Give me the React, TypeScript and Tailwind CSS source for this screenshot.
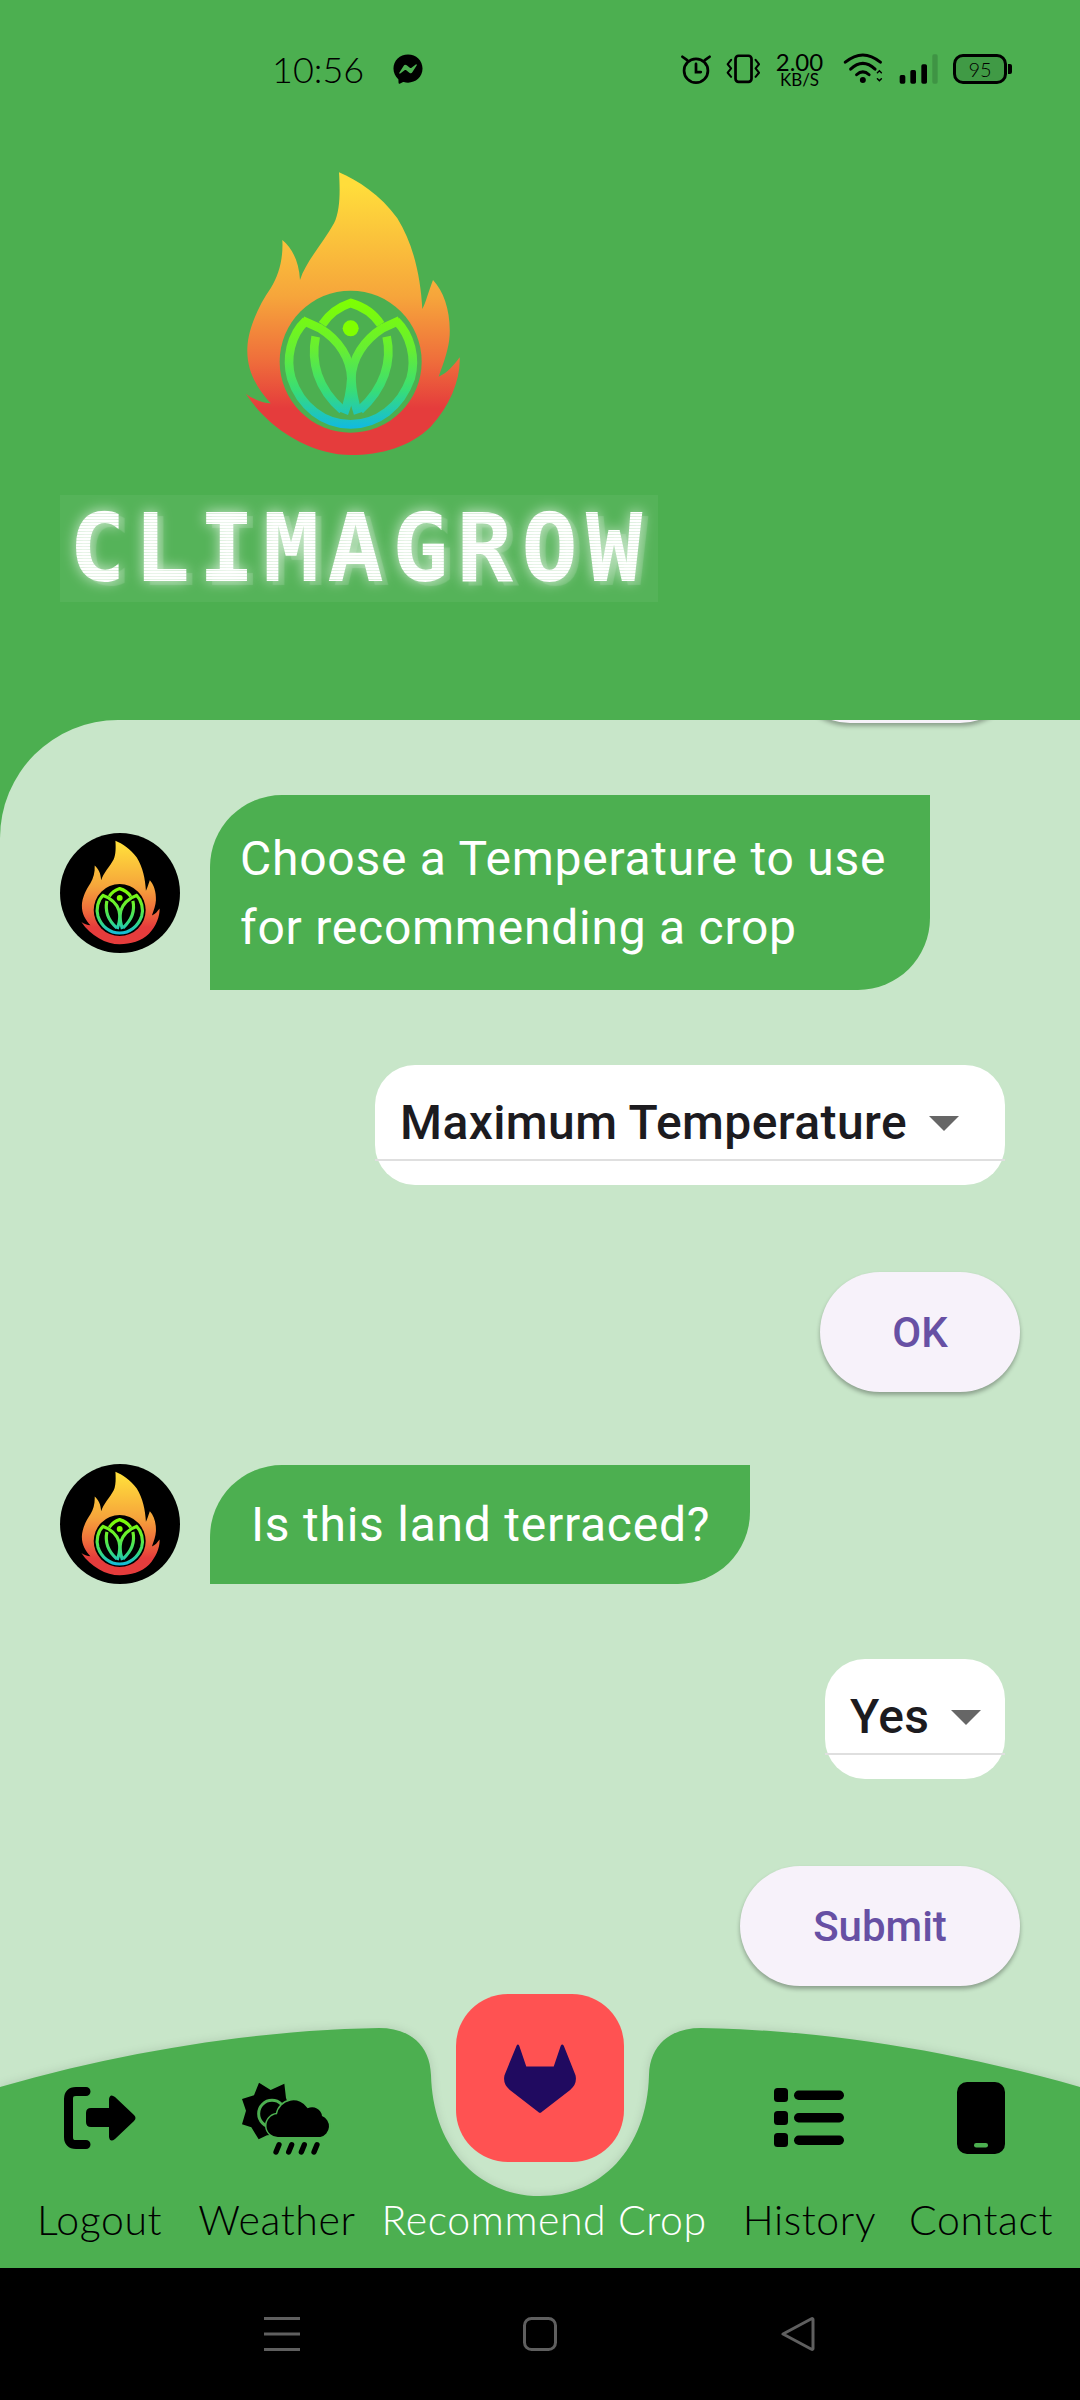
import React from "react";
import { FaFacebookMessenger } from "react-icons/fa";

const roboto = "font-['Roboto',sans-serif]";

function Logo({ w, h, inner, id }: { w: number; h: number; inner: string; id: string }) {
  return (
    <svg width={w} height={h} viewBox="0 0 705 900" className="shrink-0">
      <defs>
        <linearGradient id={`flame-${id}`} gradientUnits="userSpaceOnUse" x1="0" y1="60" x2="0" y2="730">
          <stop offset="0" stopColor="#ffdd3b" />
          <stop offset="0.5" stopColor="#f6a53b" />
          <stop offset="0.78" stopColor="#ef6f3b" />
          <stop offset="1" stopColor="#e53c3c" />
        </linearGradient>
        <linearGradient id={`lotus-${id}`} gradientUnits="userSpaceOnUse" x1="0" y1="400" x2="0" y2="785">
          <stop offset="0" stopColor="#80ff00" />
          <stop offset="0.4" stopColor="#66ee33" />
          <stop offset="0.72" stopColor="#38dd77" />
          <stop offset="1" stopColor="#12bbdd" />
        </linearGradient>
      </defs>
      <path
        fill={`url(#flame-${id})`}
        d="M315 22 C370 45 440 90 490 160 C540 240 560 340 565 432 C575 415 585 375 597 345 C630 380 650 440 647 510 C645 550 630 590 614 635 C640 625 660 600 677 577 C680 640 650 720 590 785 C530 845 440 870 350 870 C240 870 110 800 36 687 C55 700 85 715 110 715 C70 670 38 620 40 550 C42 490 75 420 110 370 C135 330 148 280 145 225 C175 250 195 290 198 345 C215 290 270 230 300 175 C320 135 318 70 315 22 Z"
      />
      <ellipse cx="350" cy="590" rx="213" ry="213" fill={inner} />
      <g fill="none" stroke={`url(#lotus-${id})`} strokeWidth="26" strokeLinejoin="miter">
        <path d="M215 468 C170 510 155 580 172 640 C200 725 270 778 350 778 C430 778 500 725 530 640 C547 580 530 510 487 468" />
        <path d="M205 466 L258 490 C315 525 350 580 352 640 C354 680 360 710 372 745" />
        <path d="M497 466 L445 490 C390 525 354 580 352 640 C350 680 344 710 330 745" />
        <path d="M245 515 C230 590 250 670 325 735" />
        <path d="M458 515 C475 590 450 670 378 735" />
        <path d="M265 478 C290 440 320 424 350 414 C385 424 415 440 440 478" />
      </g>
      <circle cx="350" cy="490" r="24" fill="#80ff00" />
    </svg>
  );
}

function Avatar({ id }: { id: string }) {
  return (
    <div className="flex h-[120px] w-[120px] shrink-0 items-center justify-center rounded-full bg-black">
      <Logo w={86} h={110} inner="#000000" id={id} />
    </div>
  );
}

function StatusBar() {
  return (
    <div className="flex h-[138px] items-center justify-between pl-[272px] pr-[68px] text-black">
      <div className="flex items-center gap-[31px]">
        <span className="w-[90px] font-['Lato',sans-serif] text-[36px] font-light leading-none">10:56</span>
        <FaFacebookMessenger size={30} color="#000" />
      </div>
      <div className="flex items-center">
        <svg width="32" height="32" viewBox="25 26 94 94" fill="none" stroke="#000" strokeWidth="8" strokeLinecap="round">
          <circle cx="72" cy="78" r="35" />
          <path d="M72 58V82H86" />
          <path d="M32 37L46 47M112 37L98 47" />
        </svg>
        <svg className="ml-[14px]" width="34" height="30" viewBox="165 28 100 88" fill="none" stroke="#000" strokeWidth="8" strokeLinecap="round" strokeLinejoin="round">
          <rect x="193" y="33" width="47" height="77" rx="9" />
          <path d="M180 45L170 58L180 70L170 83L180 95M252 45L262 58L252 70L262 83L252 95" strokeWidth="6" />
        </svg>
        <div className="ml-[14px] flex w-[51px] flex-col items-center font-['Lato',sans-serif] text-black">
          <span className="text-[24px] font-normal leading-[21px]">2.00</span>
          <span className="text-[17px] font-normal leading-[15px]">KB/S</span>
        </div>
        <svg className="ml-[18px]" width="43" height="32" viewBox="15 25 130 95" fill="none" stroke="#000" strokeWidth="9" strokeLinecap="round">
          <path d="M22 52Q75 8 128 52" />
          <path d="M38 73Q75 38 112 73" />
          <path d="M56 90Q75 72 94 90" />
          <circle cx="75" cy="106" r="9" fill="#000" stroke="none" />
          <path d="M119 84L125 78L131 84M119 102L125 108L131 102" strokeWidth="4.5" />
        </svg>
        <svg className="ml-[13px]" width="40" height="30" viewBox="185 27 120 90">
          <rect x="187" y="90" width="17" height="26" rx="5" fill="#000" />
          <rect x="219" y="75" width="17" height="41" rx="5" fill="#000" />
          <rect x="252" y="58" width="17" height="58" rx="5" fill="#000" />
          <rect x="285" y="28" width="16" height="88" rx="5" fill="#3f9444" />
        </svg>
        <div className="ml-[14px] flex items-center">
          <div className="flex h-[30px] w-[54px] items-center justify-center rounded-[10px] border-[3px] border-black bg-[#409a45] font-['Lato',sans-serif] text-[20px] font-light leading-none">
            95
          </div>
          <div className="ml-[1px] h-[10px] w-[4px] rounded-r-[2px] bg-black" />
        </div>
      </div>
    </div>
  );
}

function Header() {
  return (
    <div className="h-[720px] bg-[#4caf50]">
      <StatusBar />
      <div className="ml-[234px] mt-[27px] h-[300px] w-[235px]">
        <Logo w={235} h={300} inner="#4caf50" id="hero" />
      </div>
      <div className="ml-[60px] mt-[30px] flex h-[107px] w-[598px] items-center bg-white/5 pl-[9px]">
        <span className="bg-[repeating-linear-gradient(180deg,#ffffff_0,#ffffff_2px,rgba(255,255,255,0.7)_2px,rgba(255,255,255,0.7)_3px)] bg-clip-text font-['DejaVu_Sans_Mono',monospace] text-[94px] font-bold leading-none tracking-[8px] text-transparent [text-shadow:0_0_14px_rgba(255,255,255,0.7),6px_4px_1px_rgba(255,255,255,0.15)]">
          CLIMAGROW
        </span>
      </div>
    </div>
  );
}

function Bubble({ children, w, pad }: { children: React.ReactNode; w: number; pad: string }) {
  return (
    <div
      className={`${roboto} ${pad} flex items-center rounded-tl-[72px] rounded-br-[72px] bg-[#4caf50] text-[48px] leading-[69px] tracking-[0.75px] text-white`}
      style={{ width: w }}
    >
      {children}
    </div>
  );
}

function Select({ label, w, mt, pl }: { label: string; w: number; mt: string; pl: string }) {
  return (
    <div className={`${mt} mr-[75px] h-[120px] self-end rounded-[40px] bg-white`} style={{ width: w }}>
      <div className={`${pl} flex h-[96px] items-center gap-[22px] border-b-2 border-[#dfdfdf]`}>
        <span className={`${roboto} mt-[22px] whitespace-nowrap text-[48px] font-medium leading-none tracking-[0.4px] text-[#1c1b1f]`}>{label}</span>
        <svg className="mt-[22px] shrink-0" width="30" height="15" viewBox="0 0 30 15">
          <path d="M0 0H30L15 15Z" fill="#666666" />
        </svg>
      </div>
    </div>
  );
}

function Btn({ label, w, mt }: { label: string; w: number; mt: string }) {
  return (
    <div
      className={`${mt} ${roboto} mr-[60px] flex h-[120px] items-center justify-center self-end rounded-full bg-[#f7f2fa] pt-[2px] text-[42px] font-medium leading-none text-[#6750a4] shadow-[0_3px_4px_rgba(0,0,0,0.3)]`}
      style={{ width: w }}
    >
      {label}
    </div>
  );
}

function Chat() {
  return (
    <div className="h-[1548px] overflow-hidden rounded-tl-[118px] bg-[#c8e6c9]">
      <div className="flex flex-col">
        <div className="mr-[60px] mt-[-117px] h-[120px] w-[230px] self-end rounded-full bg-[#f7f2fa] shadow-[0_3px_4px_rgba(0,0,0,0.3)]" />
        <div className="ml-[60px] mt-[72px] flex items-center gap-[30px]">
          <Avatar id="a1" />
          <Bubble w={720} pad="h-[195px] pl-[30px]">
            <span>
              Choose a Temperature to use
              <br />
              for recommending a crop
            </span>
          </Bubble>
        </div>
        <Select label="Maximum Temperature" w={630} mt="mt-[75px]" pl="pl-[25px]" />
        <Btn label="OK" w={200} mt="mt-[87px]" />
        <div className="ml-[60px] mt-[72px] flex items-center gap-[30px]">
          <Avatar id="a2" />
          <Bubble w={540} pad="h-[119px] pl-[41px]">
            Is this land terraced?
          </Bubble>
        </div>
        <Select label="Yes" w={180} mt="mt-[75px]" pl="pl-[25px]" />
        <Btn label="Submit" w={280} mt="mt-[87px]" />
      </div>
    </div>
  );
}

const LogoutIcon = (
  <svg width="80" height="66" viewBox="60 2085 80 66">
    <path d="M86 2091.5H76Q68.5 2091.5 68.5 2099V2137Q68.5 2144.5 76 2144.5H86" fill="none" stroke="#000" strokeWidth="9" strokeLinecap="round" />
    <path d="M91 2108H109V2099Q110 2093 115 2097L134 2115Q137 2118 134 2121L115 2139Q110 2143 109 2137V2127H91Q86 2127 86 2122V2113Q86 2108 91 2108Z" fill="#000" />
  </svg>
);

const WeatherIcon = (
  <svg className="ml-[16px]" width="96" height="78" viewBox="20 24 288 234">
    <polygon fill="#000" points="86,35 121,57 162,38 167,81 185,130 150,190 110,193 85,205 63,169 35,160 47,119 35,84 71,73" />
    <circle cx="125" cy="128" r="40" fill="#000" stroke="#4caf50" strokeWidth="9" />
    <path d="M145 198A33 33 0 0 1 140 130A50 50 0 0 1 232 112A30 30 0 0 1 275 135A33 33 0 0 1 270 198Z" fill="#000" stroke="#4caf50" strokeWidth="9" paintOrder="stroke" />
    <path d="M137 243L146 221M175 243L184 221M213 243L222 221M251 243L260 221" stroke="#000" strokeWidth="16" strokeLinecap="round" />
  </svg>
);

const HistoryIcon = (
  <svg width="70" height="60" viewBox="0 0 70 60" fill="#000">
    <rect x="0" y="0" width="14" height="14" rx="3.5" />
    <rect x="0" y="23" width="14" height="14" rx="3.5" />
    <rect x="0" y="45" width="14" height="14" rx="3.5" />
    <rect x="20" y="2.5" width="50" height="9.5" rx="4.7" />
    <rect x="20" y="25" width="50" height="9.5" rx="4.7" />
    <rect x="20" y="47.5" width="50" height="9.5" rx="4.7" />
  </svg>
);

const ContactIcon = (
  <svg width="48" height="72" viewBox="0 0 48 72">
    <rect width="48" height="72" rx="10" fill="#000" />
    <rect x="17" y="61" width="14" height="4.5" rx="2.2" fill="#4caf50" />
  </svg>
);

function NavItem({ icon, label, active, cls }: { icon?: React.ReactNode; label: string; active?: boolean; cls?: string }) {
  return (
    <div className={`flex flex-col items-center ${cls ?? ""}`}>
      <div className="flex h-[72px] items-center justify-center">{icon}</div>
      <span
        className={`mt-[42px] font-['Lato',sans-serif] text-[41px] font-light leading-[48px] tracking-[0.6px] whitespace-nowrap ${active ? "text-white" : "text-black"}`}
      >
        {label}
      </span>
    </div>
  );
}

function BottomNav() {
  return (
    <div className="relative z-10 mt-[-274px] h-[274px]">
      <svg className="absolute inset-0 drop-shadow-[0_0_5px_rgba(0,0,0,0.12)]" width="1080" height="274" viewBox="0 1994 1080 274">
        <path
          fill="#4caf50"
          d="M0 2087C130 2050 260 2030 379 2028C410 2028 430 2045 431 2075C433 2150 480 2196 540 2196C600 2196 647 2150 649 2075C650 2045 670 2028 701 2028C820 2030 950 2050 1080 2087V2268H0Z"
        />
      </svg>
      <div className="absolute left-[456px] top-0 flex h-[168px] w-[168px] items-center justify-center rounded-[52px] bg-[#ff5252]">
        <svg width="74" height="71" viewBox="40 22 220 212">
          <path
            fill="#200a60"
            d="M80 30Q84 23 88 30L109 92H191L212 30Q216 23 221 30L256 118Q262 145 240 162L155 228Q150 233 145 228L60 162Q38 145 44 118Z"
          />
        </svg>
      </div>
      <div className="relative flex pl-[37px] pt-[88px]">
        <NavItem icon={LogoutIcon} label="Logout" />
        <NavItem icon={WeatherIcon} label="Weather" cls="ml-[36px]" />
        <NavItem label="Recommend Crop" active cls="ml-[26px]" />
        <NavItem icon={HistoryIcon} label="History" cls="ml-[36px]" />
        <NavItem icon={ContactIcon} label="Contact" cls="ml-[33px]" />
      </div>
    </div>
  );
}

function SystemNav() {
  return (
    <div className="flex h-[132px] items-start bg-black pl-[264px] pt-[49px]">
      <svg width="36" height="34" viewBox="0 0 36 34" stroke="#5f5f5f" strokeWidth="3">
        <path d="M0 1.5H36M0 17H36M0 32.5H36" />
      </svg>
      <svg className="ml-[223px]" width="34" height="34" viewBox="0 0 34 34" fill="none" stroke="#5f5f5f" strokeWidth="3">
        <rect x="1.5" y="1.5" width="31" height="31" rx="7" />
      </svg>
      <svg className="ml-[224px]" width="34" height="34" viewBox="0 0 34 34" fill="none" stroke="#5f5f5f" strokeWidth="3" strokeLinejoin="round">
        <path d="M32 2.5V31.5Q32 33 30 32L2 17L30 2Q32 1 32 2.5Z" />
      </svg>
    </div>
  );
}

export default function App() {
  return (
    <div className="h-[2400px] w-[1080px] overflow-hidden bg-[#4caf50]">
      <Header />
      <Chat />
      <BottomNav />
      <SystemNav />
    </div>
  );
}
